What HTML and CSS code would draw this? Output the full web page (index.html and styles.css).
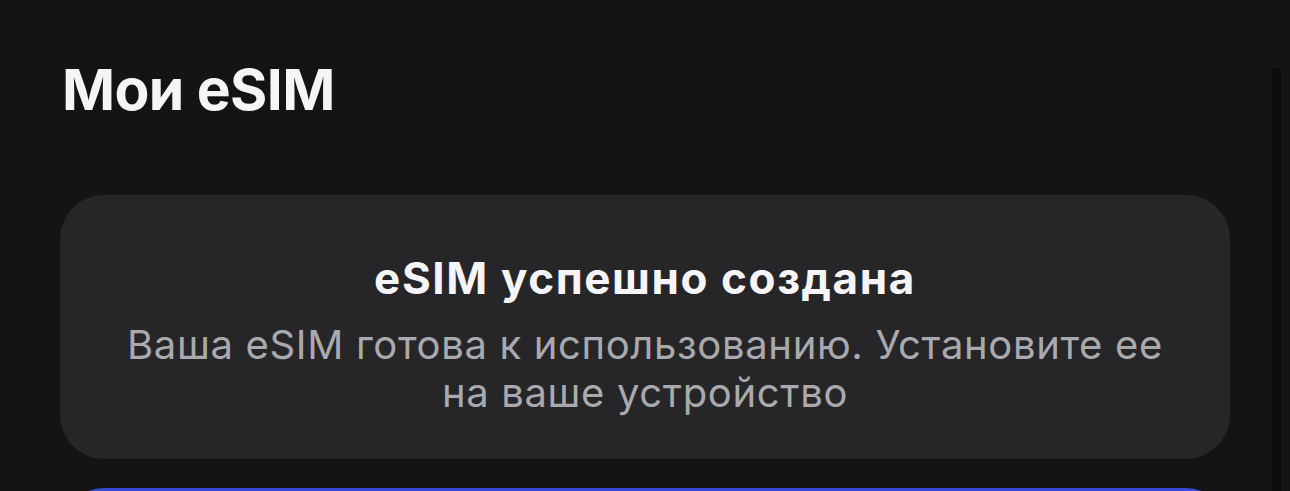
FILE: index.html
```html
<!DOCTYPE html>
<html lang="ru">
<head>
<meta charset="utf-8">
<title>Мои eSIM</title>
<link rel="stylesheet" href="styles.css">
</head>
<body>
<div class="screen">
  <h1 class="title">Мои eSIM</h1>
  <section class="card">
    <h2 class="card-title">eSIM успешно создана</h2>
    <p class="card-text">Ваша eSIM готова к использованию. Установите ее на ваше устройство</p>
  </section>
  <button class="primary" aria-label="Установить eSIM"></button>
</div>
<div class="scrollbar"></div>
</body>
</html>
```
FILE: styles.css
```css
html, body {
  margin: 0;
  padding: 0;
  background: #141416;
  height: 100%;
  overflow: hidden;
}
.screen {
  padding: 54px 60px 0 60px;
  display: flex;
  flex-direction: column;
}
.title {
  margin: 0 0 0 2px;
  font-family: Inter, "Noto Sans", sans-serif;
  font-weight: 700;
  font-size: 57px;
  line-height: 72px;
  color: #f5f5f7;
  letter-spacing: -0.6px;
}
.card {
  margin-top: 69px;
  height: 264px;
  box-sizing: border-box;
  background: #262629;
  border-radius: 44px;
  padding: 57px 60px 0 60px;
  text-align: center;
  font-family: Inter, "Noto Sans", sans-serif;
}
.card-title {
  margin: 0;
  font-weight: 700;
  font-size: 44px;
  line-height: 52px;
  letter-spacing: 1.6px;
  color: #f5f5f7;
}
.card-text {
  margin: 17px 0 0 0;
  font-weight: 400;
  font-size: 40px;
  line-height: 48px;
  letter-spacing: 0.65px;
  color: #a9a9ae;
}
.primary {
  margin-top: 29px;
  height: 100px;
  border: none;
  border-radius: 44px;
  background: #3747d6;
}
.scrollbar {
  position: absolute;
  top: 68px;
  right: 9px;
  bottom: 0;
  width: 9px;
  background: #0b0b0c;
  border-radius: 3px 3px 0 0;
}
```
